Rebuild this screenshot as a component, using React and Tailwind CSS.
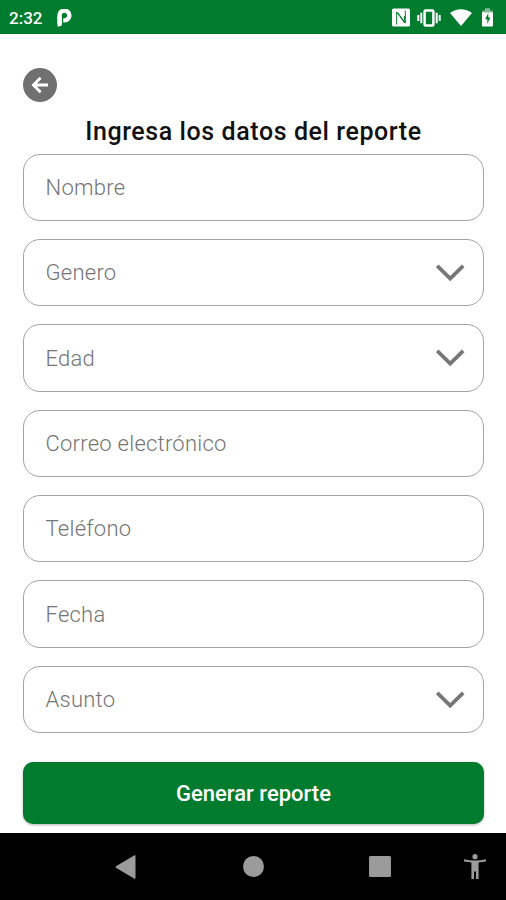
const fields = [
  { label: "Nombre" },
  { label: "Genero", select: true },
  { label: "Edad", select: true },
  { label: "Correo electrónico" },
  { label: "Teléfono" },
  { label: "Fecha" },
  { label: "Asunto", select: true },
];

function StatusBar() {
  return (
    <header className="flex h-[34px] shrink-0 items-center bg-[#017b2e] pt-[1px] pr-[12px] pl-[9px] text-white">
      <span className="w-[34px] pt-[1px] text-[17px] leading-none font-medium">2:32</span>
      <svg className="ml-[14px] h-[18px] w-[15px]" viewBox="0 0 15 18" fill="none" stroke="currentColor">
        <path d="M2.6 15V7.2A4.9 4.9 0 1 1 7.5 11.4H6.2" strokeWidth="4.4" />
        <path d="M0.5 7v9.4q0 1.4 1.3 1.2l2-.5q1-.3 1-1.5V9z" fill="currentColor" stroke="none" />
      </svg>
      <div className="ml-auto flex items-center">
        <svg className="h-[19px] w-[18px]" viewBox="0 0 18 19">
          <rect x="0" y="0.5" width="18" height="18" rx="1.6" fill="white" />
          <path d="M4.7 16.5V4L12.4 14.6V8M13.3 2.5V15L5.6 4.4" fill="none" stroke="#017b2e" strokeWidth="1" />
        </svg>
        <svg className="ml-[7px] h-[20px] w-[24px]" viewBox="0 0 24 20" fill="none" stroke="white" strokeWidth="2">
          <rect x="7.6" y="2.6" width="8.8" height="14.8" rx="1" strokeWidth="2.5" />
          <path d="M4.3 4.8v10.4M1.3 7v6M19.7 4.8v10.4M22.7 7v6" />
        </svg>
        <svg className="ml-[9px] h-[17px] w-[22px]" viewBox="0 0 22 17" fill="white">
          <path d="M0 4.1C6 -1 16 -1 22 4.1L11 17z" />
        </svg>
        <svg className="ml-[9px] h-[19px] w-[13px]" viewBox="0 0 13 19">
          <path d="M4 0.5h5v2h2a1 1 0 0 1 1 1v14a1 1 0 0 1-1 1H2a1 1 0 0 1-1-1v-14a1 1 0 0 1 1-1h2z" fill="white" />
          <path d="M1 .5h11v4H1z" fill="#017b2e" opacity=".5" />
          <path d="M7.3 5L4.2 11.2h2.1V16l3.1-6.5H7.3z" fill="#017b2e" />
        </svg>
      </div>
    </header>
  );
}

function Field({ label, select }) {
  return (
    <div className="flex h-[67.5px] shrink-0 items-center justify-between rounded-[17px] border-[1.5px] border-[#a3a3a3] pr-[18px] pl-[21.5px]">
      <span className="pt-[1.5px] text-[22px] leading-none font-light tracking-[0.25px] text-[#757575]">{label}</span>
      {select && (
        <svg className="mt-[1px] h-[18px] w-[29px]" viewBox="0 0 29 18" fill="none" stroke="#777777" strokeWidth="3.8">
          <path d="M1.2 1.8L14.2 14.6L27.2 1.8" />
        </svg>
      )}
    </div>
  );
}

function NavBar() {
  return (
    <nav className="grid h-[67px] shrink-0 grid-cols-[115px_128px_126px_95px_42px] items-center bg-black text-[#9b9b9b]">
      <span />
      <svg className="h-[24px] w-[21px]" viewBox="0 0 20 24" fill="currentColor">
        <path d="M19 .2Q20 -.1 20 .9V23.1Q20 24.1 19 23.8L.5 12.8Q-.4 12 .5 11.2z" />
      </svg>
      <span className="size-[21px] rounded-full bg-[#9b9b9b]" />
      <span className="h-[21px] w-[22px] rounded-[1.5px] bg-[#9b9b9b]" />
      <svg className="h-[25px] w-[22px]" viewBox="0 0 22 25" fill="currentColor">
        <circle cx="11" cy="2.7" r="2.6" />
        <path d="M0 5.2Q11 7.6 22 5.2V7.6L14.6 8.6V25H12V17.5H10V25H7.4V8.6L0 7.6z" />
      </svg>
    </nav>
  );
}

export default function App() {
  return (
    <div className="flex h-[900px] w-[506px] flex-col overflow-hidden bg-white font-['Roboto',sans-serif]">
      <StatusBar />
      <main className="flex h-[799px] shrink-0 flex-col pr-[22px] pl-[23px]">
        <button className="mt-[34px] flex size-[34px] shrink-0 items-center justify-center rounded-full bg-[#707070]">
          <svg className="size-[18px]" viewBox="0 0 18 18" fill="none" stroke="white" strokeWidth="2.8">
            <path d="M17 9H2.5M9.6 1.7L2.4 9L9.6 16.3" />
          </svg>
        </button>
        <h1 className="mt-[13px] h-[38.5px] shrink-0 text-center text-[25px] leading-[34px] font-medium tracking-[0.58px] whitespace-nowrap text-[#111111]">
          Ingresa los datos del reporte
        </h1>
        <div className="flex flex-col gap-[17.85px]">
          {fields.map((field) => (
            <Field key={field.label} {...field} />
          ))}
        </div>
        <button className="mt-[28.5px] flex h-[62px] shrink-0 items-center justify-center rounded-[10px] bg-[#017b2e] pt-[3px] text-[22px] leading-none font-medium text-white shadow-[0_1px_3px_rgba(0,0,0,0.3)]">
          Generar reporte
        </button>
      </main>
      <NavBar />
    </div>
  );
}
